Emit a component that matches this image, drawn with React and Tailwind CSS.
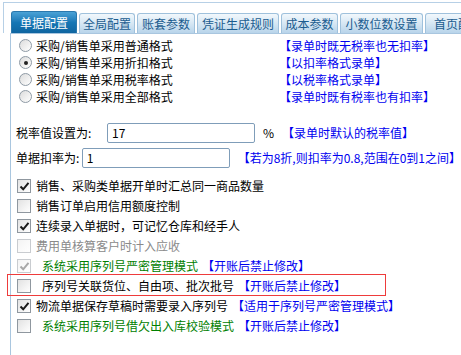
import React from 'react';

const tabs = [
  { label: '单据配置', w: 'w-[66px]' },
  { label: '全局配置', w: 'w-[56px]' },
  { label: '账套参数', w: 'w-[58px]' },
  { label: '凭证生成规则', w: 'w-[82px]' },
  { label: '成本参数', w: 'w-[57px]' },
  { label: '小数位数设置', w: 'w-[83px]' },
  { label: '首页配置', w: 'w-[66px]' },
];

const radios = [
  { label: '采购/销售单采用普通格式', note: '【录单时既无税率也无扣率】' },
  { label: '采购/销售单采用折扣格式', note: '【以扣率格式录单】', checked: true },
  { label: '采购/销售单采用税率格式', note: '【以税率格式录单】' },
  { label: '采购/销售单采用全部格式', note: '【录单时既有税率也有扣率】' },
];

const checks = [
  { label: '销售、采购类单据开单时汇总同一商品数量', checked: true },
  { label: '销售订单启用信用额度控制' },
  { label: '连续录入单据时，可记忆仓库和经手人', checked: true },
  { label: '费用单核算客户时计入应收', disabled: true },
  { label: '系统采用序列号严密管理模式', note: '【开账后禁止修改】', checked: true, disabled: true, tone: 'green', indent: true },
  { label: '序列号关联货位、自由项、批次批号', note: '【开账后禁止修改】', indent: true, boxed: true },
  { label: '物流单据保存草稿时需要录入序列号', note: '【适用于序列号严密管理模式】', checked: true },
  { label: '系统采用序列号借欠出入库校验模式', note: '【开账后禁止修改】', tone: 'green', indent: true },
];

function Radio({ checked }) {
  return (
    <span className="w-[13px] h-[13px] rounded-full border border-[#8e9aa5] bg-gradient-to-br from-[#dcdcdc] to-white flex items-center justify-center shrink-0">
      {checked && <span className="w-[4px] h-[4px] rounded-full bg-[#222]" />}
    </span>
  );
}

function Checkbox({ checked, disabled }) {
  return (
    <span
      className={`w-[14px] h-[14px] border flex items-center justify-center shrink-0 bg-gradient-to-br ${
        disabled ? 'border-[#c9ccd0] from-[#f4f4f4] to-white' : 'border-[#8f979f] from-[#e2e2e2] to-white'
      }`}
    >
      {checked && (
        <svg width="11" height="11" viewBox="0 0 11 11">
          <path
            d="M1.5 5.5 L4.2 8.3 L9.5 1.8"
            fill="none"
            stroke={disabled ? '#a8a8a8' : '#1a1a1a'}
            strokeWidth="2"
          />
        </svg>
      )}
    </span>
  );
}

export default function App() {
  return (
    <div
      className="w-[461px] h-[355px] bg-white overflow-hidden text-[12px] leading-none text-black"
      style={{ fontFamily: '"Noto Sans CJK SC", "Liberation Sans", sans-serif' }}
    >
      {/* tab strip */}
      <div className="pt-[2px] pl-[3px]">
        <div className="border-t border-l border-[#b7d0e6] h-[31px] flex items-end pl-[7px] gap-[2px] border-b-0">
          {tabs.map((t, i) =>
            i === 0 ? (
              <div
                key={t.label}
                className={`${t.w} h-[22px] shrink-0 rounded-t-[3px] border border-b-0 border-[#2a78ad] bg-gradient-to-b from-[#4aa2d6] via-[#1677b5] to-[#0f65a0] text-white flex items-center justify-center`}
              >
                {t.label}
              </div>
            ) : (
              <div
                key={t.label}
                className={`${t.w} h-[20px] shrink-0 rounded-t-[3px] border border-b-0 border-[#9fc1dc] bg-gradient-to-b from-[#f2f8fc] via-[#d6e7f4] to-[#b8d4ea] text-[#1b5c8f] flex items-center justify-center`}
              >
                {t.label}
              </div>
            )
          )}
        </div>
      </div>

      {/* panel */}
      <div className="ml-[10px] border-l border-t border-[#a9c6df] h-[322px]">
        <div className="pt-[3px] pl-[8px]">
          {radios.map((r) => (
            <div key={r.label} className="h-[17px] flex items-center">
              <Radio checked={r.checked} />
              <span className="ml-[4px] w-[243px]">{r.label}</span>
              <span className="text-[#0000f0]">{r.note}</span>
            </div>
          ))}
        </div>

        <div className="pl-[5px] mt-[18px] h-[20px] flex items-center">
          <span className="w-[91px]">税率值设置为:</span>
          <span className="w-[148px] h-[20px] border border-[#7f9db9] rounded-[2px] flex items-center pl-[4px] text-[12px]">
            17
          </span>
          <span className="ml-[8px]">%</span>
          <span className="ml-[8px] text-[#0000f0]">【录单时默认的税率值】</span>
        </div>

        <div className="pl-[5px] mt-[5px] h-[20px] flex items-center whitespace-nowrap">
          <span className="w-[79px]">单据扣率为:</span>
          <span className="w-[148px] h-[20px] border border-[#7f9db9] rounded-[2px] flex items-center pl-[4px] shrink-0">
            1
          </span>
          <span className="ml-[8px] text-[#0000f0]">【若为8折,则扣率为0.8,范围在0到1之间】</span>
        </div>

        <div className="mt-[8px] pl-[6px]">
          {checks.map((c) => (
            <div key={c.label} className="h-[20px] flex items-center relative whitespace-nowrap">
              {c.boxed && (
                <span className="absolute left-[-10px] top-[-2px] w-[379px] h-[22px] border border-[#ee3b3b]" />
              )}
              <Checkbox checked={c.checked} disabled={c.disabled} />
              <span
                className={`${c.indent ? 'ml-[11px]' : 'ml-[5px]'} ${
                  c.tone === 'green' ? 'text-[#008000]' : c.disabled ? 'text-[#8a8a8a]' : 'text-black'
                }`}
              >
                {c.label}
              </span>
              {c.note && <span className="ml-[4px] text-[#0000f0]">{c.note}</span>}
            </div>
          ))}
        </div>
      </div>
    </div>
  );
}
